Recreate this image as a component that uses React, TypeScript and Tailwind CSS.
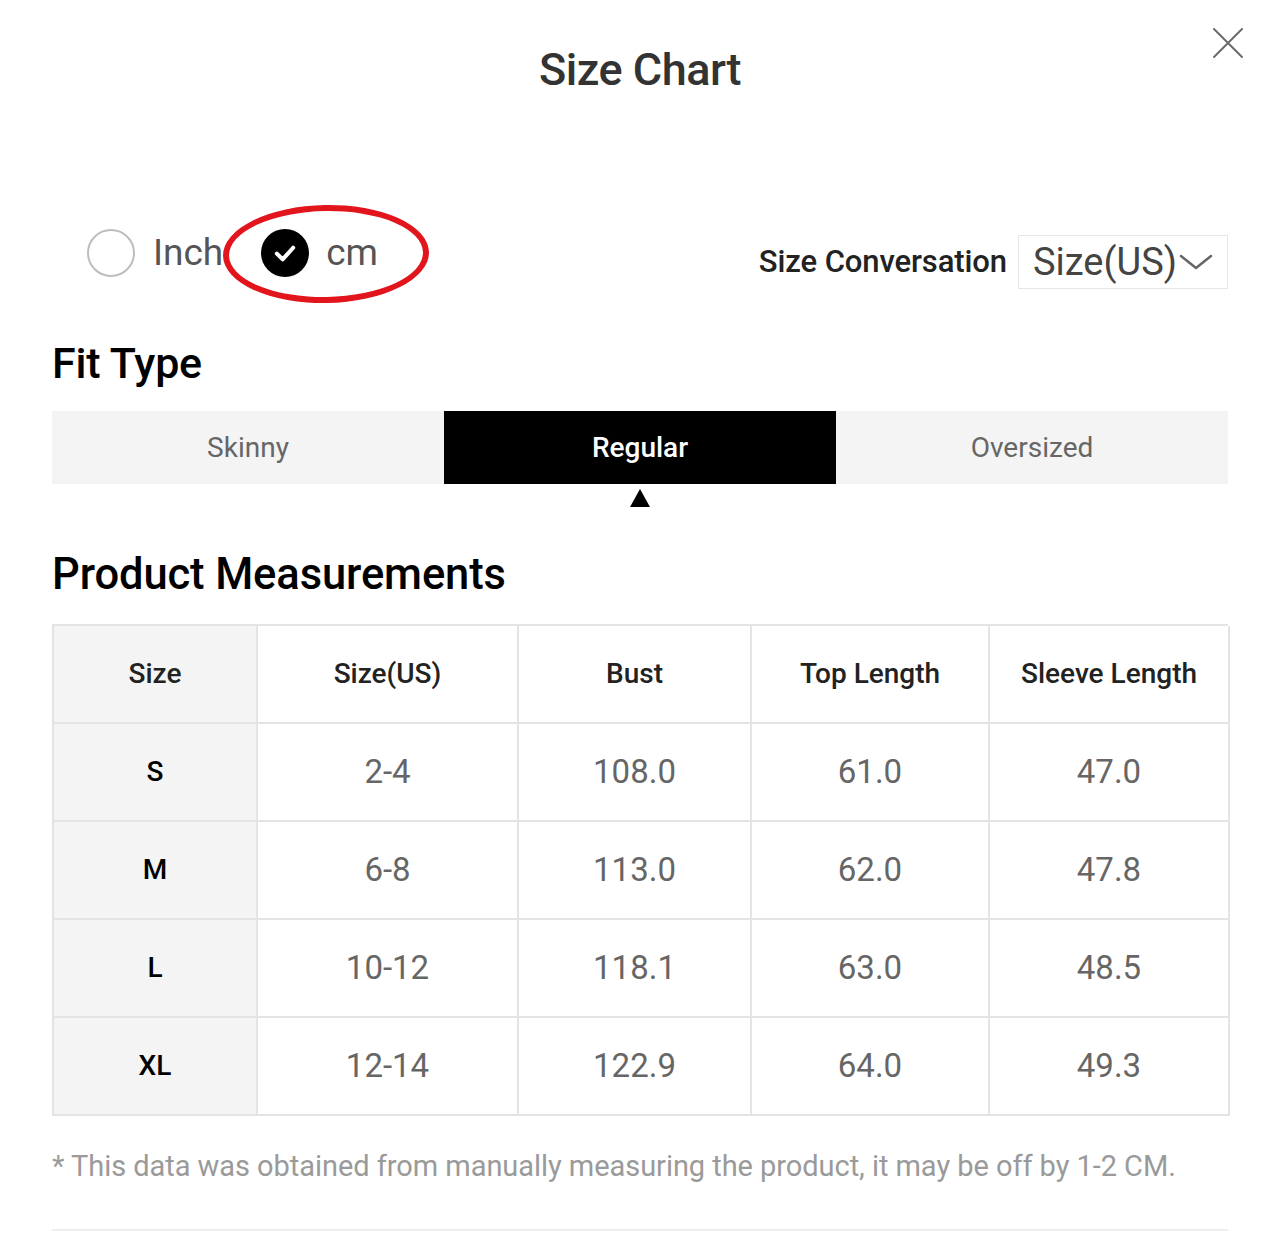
import React from 'react';

const columns = ['Size', 'Size(US)', 'Bust', 'Top Length', 'Sleeve Length'];

const rows = [
  ['S', '2-4', '108.0', '61.0', '47.0'],
  ['M', '6-8', '113.0', '62.0', '47.8'],
  ['L', '10-12', '118.1', '63.0', '48.5'],
  ['XL', '12-14', '122.9', '64.0', '49.3'],
];

function CloseIcon() {
  return (
    <svg width="32" height="32" viewBox="0 0 32 32" fill="none">
      <path d="M2 2L30 30M30 2L2 30" stroke="#6b6b6b" strokeWidth="2" strokeLinecap="round" />
    </svg>
  );
}

export default function App() {
  return (
    <div className="w-[1278px] h-[1246px] bg-white px-[50px] pl-[52px] font-[Roboto,sans-serif] overflow-hidden">
      {/* Header */}
      <div className="relative pt-[44px]">
        <h1 className="text-center text-[45px] leading-[52px] font-medium text-[#333] tracking-[-0.5px]">Size Chart</h1>
        <button className="absolute right-[-16px] top-[27px]">
          <CloseIcon />
        </button>
      </div>

      {/* Unit + conversion */}
      <div className="mt-[109px] flex items-start justify-between">
        <div className="ml-[35px] flex h-[96px] items-center">
          <span className="h-[48px] w-[48px] rounded-full border-2 border-[#bdbdbd]" />
          <span className="ml-[18px] text-[37px] text-[#555]">Inch</span>
          <div className="relative ml-[38px] flex h-[48px] items-center">
            <span className="flex h-[48px] w-[48px] items-center justify-center rounded-full bg-black">
              <svg width="28" height="28" viewBox="0 0 24 24" fill="none">
                <path d="M5 12.5L10 17.5L19 7.5" stroke="white" strokeWidth="3.5" strokeLinecap="round" strokeLinejoin="round" />
              </svg>
            </span>
            <span className="ml-[17px] text-[37px] text-[#555]">cm</span>
            <span className="pointer-events-none absolute left-[-38px] top-[-24px] h-[98px] w-[206px] rounded-[50%] border-[6px] border-[#e2141c] -rotate-1" />
          </div>
        </div>
        <div className="mt-[30px] flex items-center">
          <span className="text-[31px] font-medium text-[#222] tracking-[-0.1px]">Size Conversation</span>
          <div className="ml-[11px] flex h-[54px] w-[210px] items-center border border-[#e6e6e6] pl-[14px]">
            <span className="text-[38px] text-[#444]">Size(US)</span>
            <svg className="ml-[2px]" width="34" height="20" viewBox="0 0 34 20" fill="none">
              <path d="M2 4L17 16L32 4" stroke="#666" strokeWidth="2.5" strokeLinecap="round" strokeLinejoin="round" />
            </svg>
          </div>
        </div>
      </div>

      {/* Fit type */}
      <h2 className="mt-[40px] text-[43px] leading-[44px] font-medium text-black tracking-[-0.2px]">Fit Type</h2>
      <div className="mt-[26px] grid h-[73px] grid-cols-3 bg-[#f4f4f4]">
        <div className="flex items-center justify-center text-[28px] text-[#666]">Skinny</div>
        <div className="flex items-center justify-center bg-black text-[28px] font-medium text-white">Regular</div>
        <div className="flex items-center justify-center text-[28px] text-[#666]">Oversized</div>
      </div>
      <div className="mt-[5px] grid grid-cols-3">
        <div />
        <div className="flex justify-center">
          <span className="h-0 w-0 border-x-[10px] border-b-[18px] border-x-transparent border-b-black" />
        </div>
        <div />
      </div>

      {/* Product measurements */}
      <h2 className="mt-[45px] text-[43.5px] leading-[46px] font-medium text-black tracking-[-0.1px]">Product Measurements</h2>
      <div className="mt-[26px] grid grid-cols-[204px_261px_233px_238px_240px] border-l-2 border-t-2 border-[#e4e4e4]">
        {columns.map((c, i) => (
          <div
            key={c}
            className={`flex h-[98px] items-center justify-center border-b-2 border-r-2 border-[#e4e4e4] text-[28px] font-medium text-[#222] ${i === 0 ? 'bg-[#f4f4f4]' : 'bg-white'}`}
          >
            {c}
          </div>
        ))}
        {rows.map((r) =>
          r.map((v, i) => (
            <div
              key={r[0] + i}
              className={
                i === 0
                  ? 'flex h-[98px] items-center justify-center border-b-2 border-r-2 border-[#e4e4e4] bg-[#f4f4f4] text-[28px] font-medium text-black'
                  : 'flex h-[98px] items-center justify-center border-b-2 border-r-2 border-[#e4e4e4] bg-white text-[33px] text-[#666]'
              }
            >
              {v}
            </div>
          ))
        )}
      </div>

      <p className="mt-[33px] text-[29px] leading-[34px] text-[#9a9a9a] tracking-[-0.05px]">
        * This data was obtained from manually measuring the product, it may be off by 1-2 CM.
      </p>
      <div className="mt-[46px] h-[2px] bg-[#eeeeee]" />
    </div>
  );
}
